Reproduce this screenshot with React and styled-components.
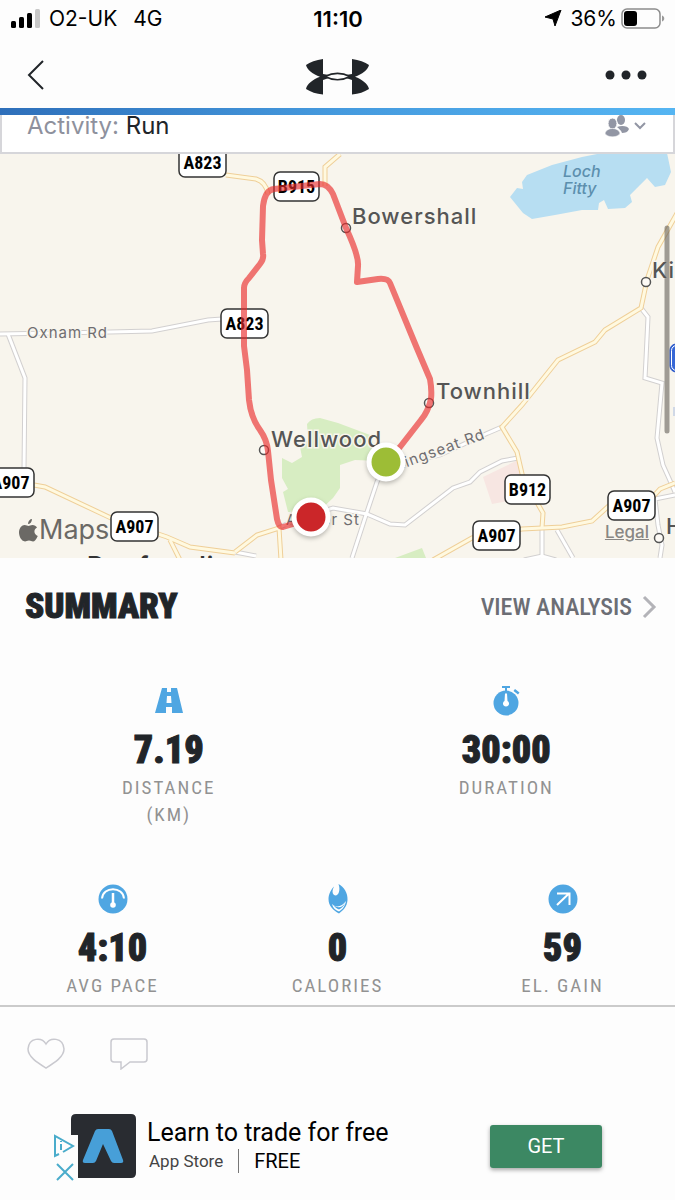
import styled, { createGlobalStyle } from 'styled-components'

const GlobalStyle = createGlobalStyle`
*{box-sizing:border-box;}
body{margin:0; background-color:#fdfdfd; font-family:Inter,"Liberation Sans",sans-serif; color:#212529;}
button{border:0; padding:0; background:none; font-family:inherit; cursor:pointer;}
a{color:inherit; text-decoration:none;}
`;

const roads = [
   'M0 334 L110 332 L152 331 L208 320 L222 319',
   'M8 334 L25 378 L24 470',
   'M278 528 L300 518 L333 508 L367 514 L390 524 L405 525 L453 488 L470 482 L480 472 L502 461 L518 458',
   'M386 462 L377 482 L366 515 L352 558',
   'M386 468 L440 455 L488 433 L502 427',
   'M641 308 L648 317 L646 359 L645 378 L662 383 L657 438 L663 465 L672 485 L675 492',
   'M542 528 L542 558',
   'M524 560 L542 556 L556 560',
   'M557 530 L573 558',
   'M675 495 L655 499 L658 525 L662 545 L660 558',
   'M235 552 L256 556',
]

const mainRoads = [
   'M226 175 L256 179 Q266 182 268 194',
   'M340 154 L325 167 L325 186',
   'M34 485 L45 487 L111 518 L167 537 L190 547 L235 553',
   'M170 540 L180 560',
   'M235 552 L257 535 L279 528 L281 560',
   'M680 208 L658 247 L647 280 L641 308 L605 330 L595 342 L558 360 L522 405 L502 427 L517 452 L523 478 L543 513 L542 528',
   'M433 560 L472 538 L522 529 L562 527 L592 521 L612 503 L650 500 L660 489 L675 483',
]

const route = 'M310 518 L293 524 L283 527 Q279 528 277 519 L271 480 L268 451 Q267 440 260 430 Q251 418 249 400 L247 370 L244 346 L244 288 Q244 283 249 278 L260 264 Q264 259 263 254 L262 240 L263 206 Q265 190 274 189 L320 184 Q328 184 333 194 L346 228 Q359 256 358 266 L357 282 L378 279 Q388 278 390 283 L416 346 L430 379 Q432 390 431 399 Q428 412 421 420 L400 447 L386 462'

const shields = [
   {name:'A823',x:179,y:148,w:47},
   {name:'B915',x:274,y:172,w:45},
   {name:'A823',x:221,y:309,w:47},
   {name:'A907',x:-13,y:468,w:47},
   {name:'A907',x:111,y:512,w:47},
   {name:'B912',x:505,y:475,w:45},
   {name:'A907',x:473,y:521,w:47},
   {name:'A907',x:608,y:491,w:47},
]

const RouteMap = () => (
   <MapArt viewBox="0 154 675 404" role="img" aria-label="Route map">
      <path fill="#f8f5ed" d="M0 154H675V558H0z"/>
      <path fill="#b7def2" d="M510 197 L517 188 L523 189 L522 182 L527 175 L552 165 L582 157 L602 153 L667 153 L671 172 L665 185 L655 187 L647 178 L640 185 L630 195 L632 202 L625 208 L608 209 L604 200 L599 203 L598 210 L582 210 L555 215 L532 219 L523 213z"/>
      <path fill="#d7edc2" d="M307 424 Q311 418 320 418 L338 423 L370 435 L380 461 L355 460 L340 465 L340 488 L333 498 L318 512 L288 512 L283 492 L288 489 L282 478 L282 458 L292 463 L302 457 L300 447 L308 440z M395 558 L422 548 L426 558z"/>
      <path fill="#f7e6e2" d="M483 477 L518 460 L524 498 L492 504z"/>
      {roads.map(d => <path key={d} d={d} fill="none" stroke="#d2d0d0" strokeWidth="5"/>)}
      {roads.map(d => <path key={d} d={d} fill="none" stroke="#fff" strokeWidth="3"/>)}
      {mainRoads.map(d => <path key={d} d={d} fill="none" stroke="#efcf98" strokeWidth="5"/>)}
      {mainRoads.map(d => <path key={d} d={d} fill="none" stroke="#fff9e0" strokeWidth="3"/>)}

      <RoadName x="27" y="338">Oxnam Rd</RoadName>
      <RoadName x="286" y="525">Amber St</RoadName>
      <RoadName x="396" y="471" transform="rotate(-20 396 471)">Kingseat Rd</RoadName>
      <WaterName x="563" y="177">Loch</WaterName>
      <WaterName x="563" y="194">Fitty</WaterName>
      <PlaceName x="352" y="224">Bowershall</PlaceName>
      <PlaceName x="436" y="399">Townhill</PlaceName>
      <PlaceName x="271" y="447">Wellwood</PlaceName>
      <PlaceName x="652" y="278">Ki</PlaceName>
      <PlaceName x="666" y="534">H</PlaceName>
      <CityName x="87" y="575">Dunfermline</CityName>
      {[[346,228],[429,403],[264,450],[646,282],[659,538]].map(([x,y]) => (
         <circle key={x} cx={x} cy={y} r="4.5" fill="#fdfaf5" stroke="#555" strokeWidth="1.5"/>
      ))}
      {shields.map(({name,x,y,w}) => (
         <g key={name + x}>
            <rect x={x} y={y} width={w} height="29" rx="6" fill="#fff" stroke="#333" strokeWidth="1.5"/>
            <ShieldText x={x + w / 2} y={y + 21}>{name}</ShieldText>
         </g>
      ))}
      <rect x="670" y="344" width="30" height="28" rx="6" fill="#3767d6" stroke="#2a55c4"/>
      <rect x="671.5" y="345.500" width="30" height="25" rx="5" fill="none" stroke="#fff"/>
      <path d="M674 407v9" stroke="#a9bce0"/>

      <path d={route} fill="none" stroke="#e92a2a" strokeOpacity=".64" strokeWidth="6" strokeLinejoin="round"/>
      <Pin cx="386" cy="462" r="17" fill="#9dbd36"/>
      <Pin cx="311" cy="517" r="17" fill="#cb2629"/>
      <path d="M667 228V431" stroke="#55504a" strokeOpacity=".55" strokeWidth="5" strokeLinecap="round"/>
   </MapArt>
)

const Signal = () => (
   <svg width="30" height="19" aria-hidden="true">
      <rect x="0" y="12" width="5" height="7" rx="1.500"/>
      <rect x="8" y="8" width="5" height="11" rx="1.500"/>
      <rect x="16" y="4" width="5" height="15" rx="1.500"/>
      <rect x="24" y="0" width="5" height="19" rx="1.500" fill="#c8c8c8"/>
   </svg>
)

const Battery = () => (
   <svg width="44" height="22" aria-hidden="true">
      <rect x="1" y="1" width="38" height="19" rx="5" fill="none" stroke="#8c8c8c" strokeWidth="1.500"/>
      <rect x="3" y="3" width="13" height="15" rx="3"/>
      <path d="M41 7.500c3 1 3 5 0 6z" fill="#999"/>
   </svg>
)

const Logo = () => (
   <svg width="64" height="36" viewBox="0 0 64 36" aria-label="Under Armour">
      <g fill="#212529">
         <path d="M17 0C10 1 4 3 0 6c1 5 7 9 14 11.800C7 20.500 1 25 0 30c5 3 10 5 17 5.500V21l6-2v-3l-6-1z"/>
         <path d="M46 0c7 1 13 3 17 6-1 5-7 9-14 11.800C56 20.500 62 25 63 30c-5 3-10 5-17 5.500V21l-6-2v-3l6-1z"/>
      </g>
      <path d="M19 17.500c8-4 17-4 25 0-8 4.200-17 4.200-25 0z" fill="#fdfdfd" stroke="#212529" strokeWidth="1.600"/>
   </svg>
)

const Stat = ({icon,value,label}) => (
   <StatBox>
      <svg width="30" height="30" viewBox="0 0 30 30" aria-hidden="true">{icon}</svg>
      <Value>{value}</Value>
      <Label>{label}</Label>
   </StatBox>
)

const icons = {
   road: <path fill="#4fa6e2" fillRule="evenodd" d="M8 2h5v4h4V2h6l6 25H18v-6h-6v6H1zM13 10l-.5 7h5l-.5-7z"/>,
   watch: (
      <>
         <circle cx="15" cy="17" r="12.500" fill="#4fa6e2"/>
         <path fill="#4fa6e2" d="M11 0h8v2h-3v4h-2V2h-3zM24 3l4.500 3.500-1.500 2-4.500-3.500z"/>
         <path fill="#fff" d="M14 7.500h2l.5 7.500a3 3 0 1 1-3 0z"/>
      </>
   ),
   gauge: (
      <>
         <circle cx="15" cy="15" r="14.500" fill="#4fa6e2"/>
         <path d="M4 14.500C5 2 25 2 26 14.500" fill="none" stroke="#fff" strokeWidth="2"/>
         <path d="M15 9v12" stroke="#fff" strokeWidth="2.500"/>
         <circle cx="15" cy="21" r="2.800" fill="#fff"/>
      </>
   ),
   flame: (
      <>
         <path fill="#4fa6e2" d="M15.500 0C21 3 25 9 24.500 16c-.5 7-4.500 10.500-8.500 13.500C10 26 5.500 22 5.500 15c0-5 3-10 5.500-12.500-2 4-2 7 0 8.500 4 2 7-4 4.500-11z"/>
         <path d="M9 20c4 4 10 3 14-3-1 5-3 8-7 10.500C12 26 10 24 9 20z" fill="#fff"/>
         <path d="M10 20c4 5 9 4 12-1-1 3-3 5-6 6.500-3-1-5-3-6-5.500z" fill="#4fa6e2"/>
      </>
   ),
   gain: (
      <>
         <circle cx="15" cy="15" r="14.500" fill="#4fa6e2"/>
         <path d="M9 21 21 9.500M9 9.500h12.500V21" fill="none" stroke="#fff" strokeWidth="2"/>
      </>
   ),
}

const App = () => {
   return (
      <Page>
         <GlobalStyle/>
         <StatusBar>
            <Carrier><Signal/><span>O2-UK</span><span>4G</span></Carrier>
            <Clock>11:10</Clock>
            <Power>
               <svg width="17" height="17" viewBox="0 0 17 17" aria-hidden="true"><path d="M16 0 10 16 8 9 0 7z" stroke="#000" strokeLinejoin="round"/></svg>
               <span>36%</span>
               <Battery/>
            </Power>
         </StatusBar>
         <NavBar>
            <NavButton aria-label="Back">
               <svg width="18" height="32"><path d="M16 2 2 16 16 30" fill="none" stroke="#212529" strokeWidth="2"/></svg>
            </NavButton>
            <Logo/>
            <NavButton $end aria-label="More">
               <svg width="44" height="10" fill="#212529"><circle cx="6" cy="5" r="4.500"/><circle cx="22" cy="5" r="4.500"/><circle cx="38" cy="5" r="4.500"/></svg>
            </NavButton>
         </NavBar>
         <Progress/>
         <ActivityBar>
            <p>Activity: <b>Run</b></p>
            <Privacy aria-label="Privacy">
               <svg width="24" height="22" viewBox="0 0 24 22" fill="#9296a4">
                  <ellipse cx="16" cy="5" rx="4" ry="5"/>
                  <path d="M12 12c5-2 11-1 12 2-1 3-4 4-7 4-1-3-3-4-5-6z"/>
                  <ellipse cx="7.500" cy="8.500" rx="4.500" ry="5.500" stroke="#fff"/>
                  <path d="M0 18c2-6 13-6 15 0-1 5-14 5-15 0z" stroke="#fff" strokeWidth=".5"/>
               </svg>
               <svg width="12" height="8"><path d="M1 1 6 6 11 1" fill="none" stroke="#9296a4" strokeWidth="2"/></svg>
            </Privacy>
         </ActivityBar>

         <MapFrame>
            <RouteMap/>
            <MapBrand>
               <svg width="19" height="23" viewBox="0 0 19 23" fill="#6b6965" aria-hidden="true">
                  <path d="M13 0c0 3-2 5-4 5 0-3 2-5 4-5zM9.500 7c1 0 2-1 4-1 2 0 3.500 1 4.500 2.500-4 2-3 7 .8 8.500C17 21 15.500 22.500 14 22.500s-2-1-4-1-2.500 1-4 1C2 22 0 17 0 13.500 0 9 3 6 5.500 6 7.500 6 8.500 7 9.500 7z"/>
               </svg>
               Maps
            </MapBrand>
            <Legal href="#legal">Legal</Legal>
         </MapFrame>

         <Summary>
            <SummaryHead>
               <h2>SUMMARY</h2>
               <Analysis href="#analysis">
                  VIEW ANALYSIS
                  <svg width="15" height="24"><path d="M2 2 12 12 2 22" fill="none" stroke="#b3b3b8" strokeWidth="3"/></svg>
               </Analysis>
            </SummaryHead>
            <StatRow $tall>
               <Stat icon={icons.road} value="7.19" label={<>DISTANCE<br/>(KM)</>}/>
               <Stat icon={icons.watch} value="30:00" label="DURATION"/>
            </StatRow>
            <StatRow>
               <Stat icon={icons.gauge} value="4:10" label="AVG PACE"/>
               <Stat icon={icons.flame} value="0" label="CALORIES"/>
               <Stat icon={icons.gain} value="59" label="EL. GAIN"/>
            </StatRow>
         </Summary>

         <Actions>
            <button aria-label="Like">
               <svg width="38" height="32" fill="none" stroke="#c9c9cf" strokeWidth="1.500"><path d="M19 6C15-1 2-1 1 11c0 8 10 14 18 19 8-5 18-11 18-19C36-1 23-1 19 6z"/></svg>
            </button>
            <button aria-label="Comment">
               <svg width="38" height="32" fill="none" stroke="#c9c9cf" strokeWidth="1.500"><path d="M4 1H34q3 0 3 3V21q0 3-3 3H20L11 31V24H4q-3 0-3-3V4q0-3 3-3z"/></svg>
            </button>
         </Actions>

         <Ad>
            <AdChoices>
               <svg width="20" height="22" viewBox="0 0 20 22" fill="none" stroke="#4aaccb" strokeWidth="2"><path d="M5 19 1 21V1L19 11 9 17M7 9v6M7 6v1"/></svg>
               <button aria-label="Close ad">
                  <svg width="18" height="18" stroke="#4aaccb" strokeWidth="2"><path d="M1 1 17 17M17 1 1 17"/></svg>
               </button>
            </AdChoices>
            <svg width="65" height="64" viewBox="0 0 65 64" aria-hidden="true">
               <path fill="#292c31" d="M5 0H60q5 0 5 5V59q0 5-5 5H7V21H0V5q0-5 5-5z"/>
               <path fill="#479fd8" d="M27 15H38q2 0 3 2L52 46q1 3-2 3H43q-2 0-3-2L32 30 25 47q-1 2-3 2H14q-3 0-2-3L24 17q1-2 3-2z"/>
            </svg>
            <AdText>
               <AdTitle>Learn to trade for free</AdTitle>
               <AdMeta><span>App Store</span><strong>FREE</strong></AdMeta>
            </AdText>
            <GetButton>GET</GetButton>
         </Ad>
      </Page>
   )
}

const condensed = '"Roboto Condensed","Liberation Sans Narrow","Open Sans Condensed",Roboto,sans-serif'

const Page = styled.div`
display:flex; flex-direction:column;
`;

const StatusBar = styled.header`
display:grid; grid-template-columns:1fr auto 1fr; align-items:center;
height:37px; padding:0 10px 0 11px;
font-size:21px; color:#000;
`;

const Carrier = styled.div`
display:flex; align-items:center; gap:8px;
span + span{margin-left:8px;}
`;

const Clock = styled.time`
font-size:22px; font-weight:600;
`;

const Power = styled.div`
display:flex; align-items:center; justify-content:flex-end; gap:4px;
svg:first-child{margin-right:4px;}
`;

const NavBar = styled.nav`
display:grid; grid-template-columns:1fr auto 1fr; align-items:center;
height:71px; padding:4px 27px 0;
`;

const NavButton = styled.button`
display:flex; justify-self:${props => props.$end ? 'end' : 'start'};
& + svg{margin-top:4px;}
`;

const Progress = styled.div`
height:7px;
background:linear-gradient(90deg,#2e6fba,#459ade 50%,#55b5f2);
`;

const ActivityBar = styled.div`
display:flex; justify-content:space-between; align-items:flex-start;
height:39px; padding:0 27px 0 25px;
border:solid #d6d6da; border-width:0 2px 2px;
background-color:#fff;
p{margin:0; font-size:24px; line-height:22px; color:#8e919d;}
b{font-weight:400; color:#212529;}
`;

const Privacy = styled.button`
display:flex; align-items:center; gap:5px;
`;

const MapFrame = styled.section`
position:relative;
`;

const MapArt = styled.svg`
display:block; width:100%;
`;

const RoadName = styled.text`
font-size:15px; letter-spacing:1px; fill:#6f6d70;
stroke:#f8f5ed; stroke-width:3px; paint-order:stroke;
`;

const WaterName = styled.text`
font-size:16px; font-style:italic; font-weight:500; fill:#5c8fae;
`;

const PlaceName = styled.text`
font-size:22px; font-weight:500; letter-spacing:1px; fill:#555;
stroke:#f8f5ed; stroke-width:3px; paint-order:stroke;
`;

const CityName = styled.text`
font-size:25px; font-weight:600; letter-spacing:1px; fill:#333;
`;

const ShieldText = styled.text`
font-family:${condensed}; font-size:18px; font-weight:700; text-anchor:middle; fill:#000;
`;

const Pin = styled.circle`
stroke:#fff; stroke-width:5px;
filter:drop-shadow(0 2px 2px rgba(0,0,0,.25));
`;

const MapBrand = styled.div`
position:absolute; left:19px; bottom:12px;
display:flex; align-items:center; gap:1px;
font-size:27px; line-height:32px; color:#6b6965;
`;

const Legal = styled.a`
position:absolute; right:26px; bottom:15px;
font-size:17px; line-height:22px; font-weight:500;
text-decoration:underline; color:#898784;
`;

const Summary = styled.section`
border-bottom:2px solid #cbcbcb;
padding-bottom:6px;
`;

const SummaryHead = styled.div`
display:flex; justify-content:space-between; align-items:center;
padding:32px 18px 0 25px;
h2{margin:0; font-family:${condensed}; font-size:35px; line-height:34px; font-weight:900; -webkit-text-stroke:1px;}
`;

const Analysis = styled.a`
display:flex; align-items:center; gap:10px;
font-family:${condensed}; font-size:24px; line-height:34px; font-weight:500; color:#6c6e75;
`;

const StatRow = styled.div`
display:flex;
padding-top:${props => props.$tall ? '62px' : '56px'};
`;

const StatBox = styled.div`
flex:1; display:flex; flex-direction:column; align-items:center;
`;

const Value = styled.div`
margin-top:10px;
font-family:${condensed}; font-size:38px; line-height:48px; font-weight:900;
-webkit-text-stroke:1px;
`;

const Label = styled.div`
font-family:${condensed}; font-size:19px; line-height:27px; letter-spacing:2px;
text-align:center; color:#929292;
`;

const Actions = styled.div`
display:flex; gap:45px;
padding:31px 27px 41px;
button,svg{display:block;}
`;

const Ad = styled.aside`
display:flex; align-items:center;
padding:0 73px 0 54px;
font-family:Roboto,sans-serif;
`;

const AdChoices = styled.div`
display:flex; flex-direction:column; gap:6px;
width:17px; margin-top:24px;
svg{display:block; overflow:visible; flex-shrink:0;}
button{margin-left:2px;}
`;

const AdText = styled.div`
flex:1; padding:0 0 2px 11px; color:#000;
`;

const AdTitle = styled.div`
font-size:25px; line-height:32px;
`;

const AdMeta = styled.div`
display:flex; align-items:center; padding-left:2px;
font-size:17px; line-height:24px; color:#444;
strong{margin-left:15px; padding-left:15px; border-left:1px solid #777; font-size:20px; font-weight:400; color:#000;}
`;

const GetButton = styled.button`
width:112px; height:43px;
border-radius:3px; background-color:#3c8863;
box-shadow:0 2px 4px rgba(0,0,0,.35);
font-size:20px; color:#fff;
`;

export default App
